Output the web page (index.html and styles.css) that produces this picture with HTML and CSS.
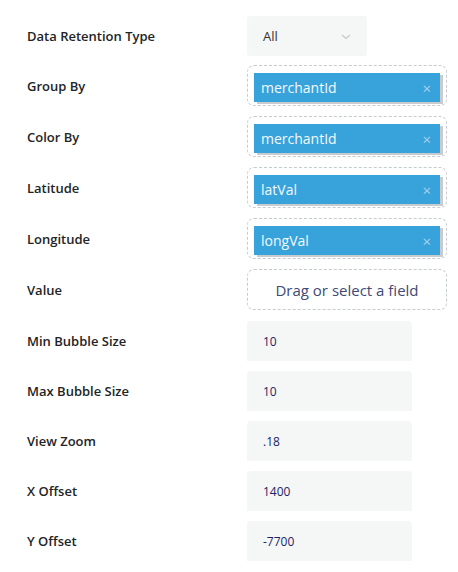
FILE: index.html
```html
<!DOCTYPE html>
<html>
<head>
<meta charset="utf-8">
<link rel="stylesheet" href="styles.css">
</head>
<body>
<div class="form">
  <div class="row row-select">
    <div class="label">Data Retention Type</div>
    <div class="select">
      <span>All</span>
      <svg class="chev" width="10" height="6" viewBox="0 0 10 6"><path d="M1 1 L5 4.5 L9 1" fill="none" stroke="#c3c8cc" stroke-width="1.2"/></svg>
    </div>
  </div>
  <div class="row row-drop">
    <div class="label">Group By</div>
    <div class="drop"><div class="chip"><span>merchantId</span><span class="x">×</span></div></div>
  </div>
  <div class="row row-drop">
    <div class="label">Color By</div>
    <div class="drop"><div class="chip"><span>merchantId</span><span class="x">×</span></div></div>
  </div>
  <div class="row row-drop">
    <div class="label">Latitude</div>
    <div class="drop"><div class="chip"><span>latVal</span><span class="x">×</span></div></div>
  </div>
  <div class="row row-drop">
    <div class="label">Longitude</div>
    <div class="drop"><div class="chip"><span>longVal</span><span class="x">×</span></div></div>
  </div>
  <div class="row row-drop last">
    <div class="label">Value</div>
    <div class="drop empty">Drag or select a field</div>
  </div>
  <div class="row row-input">
    <div class="label">Min Bubble Size</div>
    <div class="input">10</div>
  </div>
  <div class="row row-input">
    <div class="label">Max Bubble Size</div>
    <div class="input">10</div>
  </div>
  <div class="row row-input">
    <div class="label">View Zoom</div>
    <div class="input">.18</div>
  </div>
  <div class="row row-input">
    <div class="label">X Offset</div>
    <div class="input">1400</div>
  </div>
  <div class="row row-input">
    <div class="label">Y Offset</div>
    <div class="input">-7700</div>
  </div>
</div>
</body>
</html>
```
FILE: styles.css
```css
html, body {
  margin: 0;
  padding: 0;
  background: #ffffff;
}
body {
  font-family: "Open Sans", "Noto Sans", sans-serif;
}
.form {
  display: flex;
  flex-direction: column;
  gap: 10px;
  padding: 16px 0 0 27px;
}
.row {
  display: flex;
  align-items: center;
}
.label {
  width: 220px;
  font-size: 13px;
  font-weight: 600;
  color: #222426;
}
.select {
  width: 120px;
  height: 40px;
  box-sizing: border-box;
  background: #f5f6f6;
  border-radius: 3px;
  display: flex;
  align-items: center;
  justify-content: space-between;
  padding: 0 16px 0 16px;
  font-size: 13px;
  color: #333;
}
.chev { margin-top: 1px; }
.row-drop { margin-top: -1px; }
.row-drop + .row-drop { margin-top: 0; }
.row-drop.last { margin-bottom: 1px; }
.drop {
  width: 200px;
  height: 41px;
  box-sizing: border-box;
  border: 1px dashed #c5cbd0;
  border-radius: 7px;
  padding: 7px 6px 0 6px;
}
.chip {
  height: 29px;
  width: 186px;
  box-sizing: border-box;
  background: #38a2da;
  box-shadow: 3px 2px 0 #c9cccf;
  display: flex;
  align-items: center;
  justify-content: space-between;
  padding: 0 9px 0 7px;
  color: #f4f9fc;
  font-size: 14px;
}
.chip .x {
  color: #a9d2ec;
  font-size: 15px;
}
.drop.empty {
  display: flex;
  align-items: center;
  justify-content: center;
  padding: 0;
  font-size: 15px;
  color: #404a74;
}
.input {
  width: 165px;
  height: 40px;
  box-sizing: border-box;
  background: #f5f6f6;
  border-radius: 4px 4px 0 0;
  display: flex;
  align-items: center;
  padding-left: 16px;
  font-size: 12px;
  color: #1c2466;
}
```
